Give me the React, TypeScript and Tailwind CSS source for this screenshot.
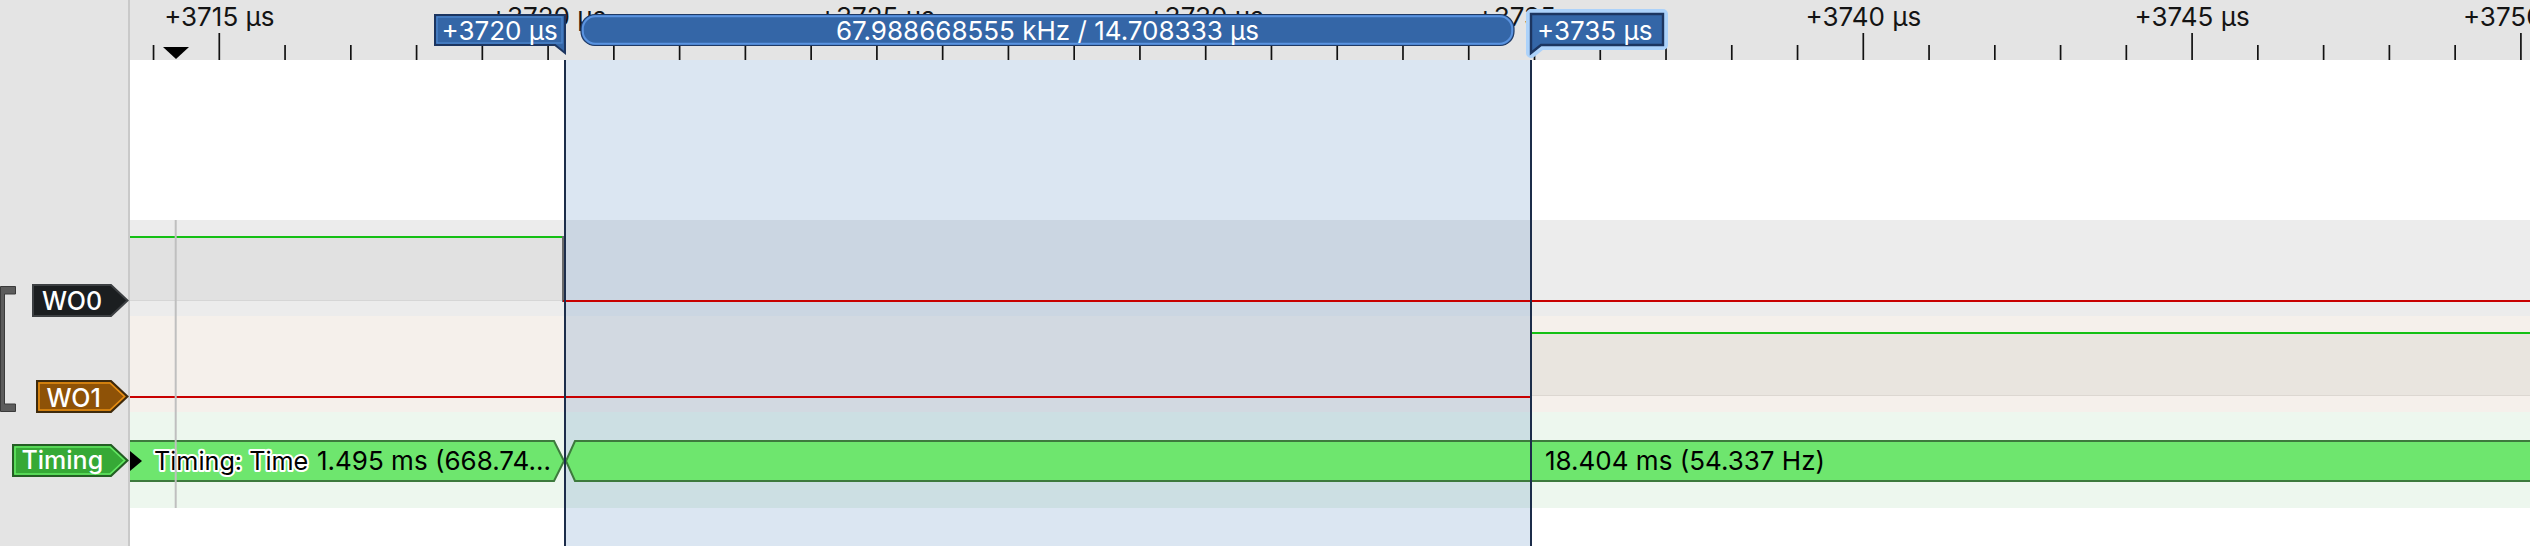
import React from "react";

const X0 = 219.3;
const PX = 65.76;
const xt = (t: number) => X0 + (t - 3715) * PX;
const M1 = 565;
const M2 = 1531;

type TagProps = {
  width: number;
  fill: string;
  outer: string;
  inner?: string;
  label: string;
  textX: number;
  baseline: number;
};

function Tag({ width, fill, outer, inner, label, textX, baseline }: TagProps) {
  const body = width - 17;
  return (
    <svg width={width} height={33} className="block overflow-visible">
      <polygon
        points={`1,1 ${body},1 ${width - 0.5},16.5 ${body},32 1,32`}
        fill={fill}
        stroke={outer}
        strokeWidth={2}
      />
      {inner && (
        <polygon
          points={`3,3 ${body - 1},3 ${width - 3.5},16.5 ${body - 1},30 3,30`}
          fill="none"
          stroke={inner}
          strokeWidth={1.6}
        />
      )}
      <text x={textX} y={baseline} fill="#ffffff" fontSize={25} fontWeight={500}>
        {label}
      </text>
    </svg>
  );
}

function Bracket() {
  return (
    <svg width={16} height={126} className="block">
      <path
        d="M0.5,0.5 H15.5 V8 H4.5 V118 H15.5 V125.5 H0.5 Z"
        fill="#5c5c5c"
        stroke="#3a3a3a"
        strokeWidth={1}
      />
    </svg>
  );
}

function LeftPanel() {
  return (
    <div className="flex w-[130px] shrink-0 flex-col border-r-2 border-[#c9c9c9] bg-[#e4e4e4]">
      <div className="h-[220px]" />
      <div className="flex h-[192px]">
        <div className="w-[16px] pt-[66px]">
          <Bracket />
        </div>
        <div className="flex flex-1 flex-col">
          <div className="flex h-[96px] justify-end pt-[64px]">
            <Tag width={96} fill="#1b1e20" outer="#3c3f42" label="WO0" textX={10} baseline={26} />
          </div>
          <div className="flex h-[96px] justify-end pt-[64px]">
            <Tag
              width={92}
              fill="#8e5207"
              outer="#3f2a0c"
              inner="#e78e12"
              label="WO1"
              textX={10.5}
              baseline={26.5}
            />
          </div>
        </div>
      </div>
      <div className="flex h-[96px] justify-end pt-[32px]">
        <Tag
          width={116}
          fill="#36a936"
          outer="#245e24"
          inner="#63e863"
          label="Timing"
          textX={9.5}
          baseline={25}
        />
      </div>
    </div>
  );
}

function Overlay() {
  const ticks: React.ReactNode[] = [];
  for (let t = 3714; t <= 3751; t++) {
    const x = xt(t);
    if (x < 131 || x > 2530) continue;
    const major = t % 5 === 0;
    ticks.push(
      <line key={t} x1={x} x2={x} y1={major ? 33 : 45} y2={60} stroke="#111111" strokeWidth={1.7} />
    );
  }
  const labels = [3715, 3720, 3725, 3730, 3735, 3740, 3745, 3750].map((t) => (
    <text key={t} x={xt(t)} y={26} textAnchor="middle" fontSize={26} fill="#141414">
      {`+${t} µs`}
    </text>
  ));

  const bubble2 = `M${M2},53 V14 H1663 V45 H${M2 + 10} Z`;

  return (
    <svg
      className="absolute inset-0"
      width={2400}
      height={546}
      viewBox="130 0 2400 546"
    >
      {/* selection tint */}
      <rect x={M1} y={60} width={M2 - M1} height={486} fill="rgba(34,97,173,0.16)" />

      {/* WO0 high area */}
      <rect x={130} y={238} width={563 - 130} height={62} fill="#e1e1e1" />
      <line x1={130} x2={563} y1={300.5} y2={300.5} stroke="#d6d6d6" strokeWidth={1} />
      {/* WO1 high area */}
      <rect x={M2} y={334} width={2530 - M2} height={62} fill="#e9e5df" />
      <line x1={M2} x2={2530} y1={395.5} y2={395.5} stroke="#dcd7d1" strokeWidth={1} />

      {/* WO0 waveform */}
      <line x1={130} x2={563} y1={237} y2={237} stroke="#14c014" strokeWidth={2} />
      <line x1={563} x2={563} y1={236} y2={302} stroke="#6a6a6a" strokeWidth={2} />
      <line x1={563} x2={2530} y1={301} y2={301} stroke="#c80000" strokeWidth={2} />
      {/* WO1 waveform */}
      <line x1={130} x2={M2} y1={397} y2={397} stroke="#c80000" strokeWidth={2} />
      <line x1={M2} x2={M2} y1={332} y2={398} stroke="#6a6a6a" strokeWidth={2} />
      <line x1={M2} x2={2530} y1={333} y2={333} stroke="#14c014" strokeWidth={2} />

      {/* Timing bus */}
      <polygon
        points="110,441 554,441 564,461 554,481 110,481"
        fill="#6ee66e"
        stroke="#3d7a3d"
        strokeWidth={2}
      />
      <polygon
        points="566,461 575,441 2545,441 2545,481 575,481"
        fill="#6ee66e"
        stroke="#3d7a3d"
        strokeWidth={2}
      />
      <polygon points="130,451 142,461 130,471" fill="#000000" />
      <text
        x={154}
        y={470}
        fontSize={25.2}
        fill="#000000"
        stroke="#ffffff"
        strokeWidth={4}
        strokeLinejoin="round"
        paintOrder="stroke"
      >
        Timing: Time
      </text>
      <text x={317} y={470} fontSize={26} fill="#000000">
        1.495 ms (668.74…
      </text>
      <text x={1545} y={470} fontSize={26} fill="#000000">
        18.404 ms (54.337 Hz)
      </text>

      {/* cursor line */}
      <line x1={175.7} x2={175.7} y1={220} y2={508} stroke="#bfbfbf" strokeWidth={2} />

      {/* ruler */}
      {ticks}
      {labels}
      <polygon points="163,47 189,47 176,59" fill="#000000" />

      {/* marker lines */}
      <line x1={M1} x2={M1} y1={60} y2={546} stroke="#1c2d4a" strokeWidth={2} />
      <line x1={M2} x2={M2} y1={60} y2={546} stroke="#1c2d4a" strokeWidth={2} />

      {/* marker 1 bubble */}
      <path
        d={`M435,15 H${M1} V53 L${M1 - 10},45 H435 Z`}
        fill="#3466a7"
        stroke="#1c3560"
        strokeWidth={2}
      />
      <rect x={437} y={17} width={125} height={26} fill="none" stroke="#4f88cf" strokeWidth={1.2} />
      <text x={441.5} y={40} fontSize={26} fill="#ffffff">
        +3720 µs
      </text>

      {/* measurement pill */}
      <rect x={581} y={14.5} width={933} height={31} rx={14} fill="#3466a7" stroke="#1f3a66" strokeWidth={1.2} />
      <rect
        x={582.8}
        y={16.3}
        width={929.4}
        height={27.4}
        rx={12.5}
        fill="none"
        stroke="#5a93e0"
        strokeWidth={2}
      />
      <text x={1047.5} y={40} fontSize={26} fill="#ffffff" textAnchor="middle">
        67.988668555 kHz / 14.708333 µs
      </text>

      {/* marker 2 bubble (highlighted) */}
      <path d={bubble2} fill="#acd2fa" stroke="#acd2fa" strokeWidth={10} strokeLinejoin="round" />
      <path d={bubble2} fill="#3466a7" stroke="#1c3560" strokeWidth={2.4} />
      <text x={1537} y={40} fontSize={26} fill="#ffffff">
        +3735 µs
      </text>
    </svg>
  );
}

export default function App() {
  return (
    <div className="flex h-[546px] w-[2530px] overflow-hidden bg-white font-['Inter',sans-serif]">
      <LeftPanel />
      <div className="relative flex flex-1 flex-col">
        <div className="h-[60px] bg-[#e4e4e4]" />
        <div className="h-[160px] bg-white" />
        <div className="h-[96px] bg-[#ececec]" />
        <div className="h-[96px] bg-[#f5f0eb]" />
        <div className="h-[96px] bg-[#edf7ee]" />
        <div className="flex-1 bg-white" />
        <Overlay />
      </div>
    </div>
  );
}
